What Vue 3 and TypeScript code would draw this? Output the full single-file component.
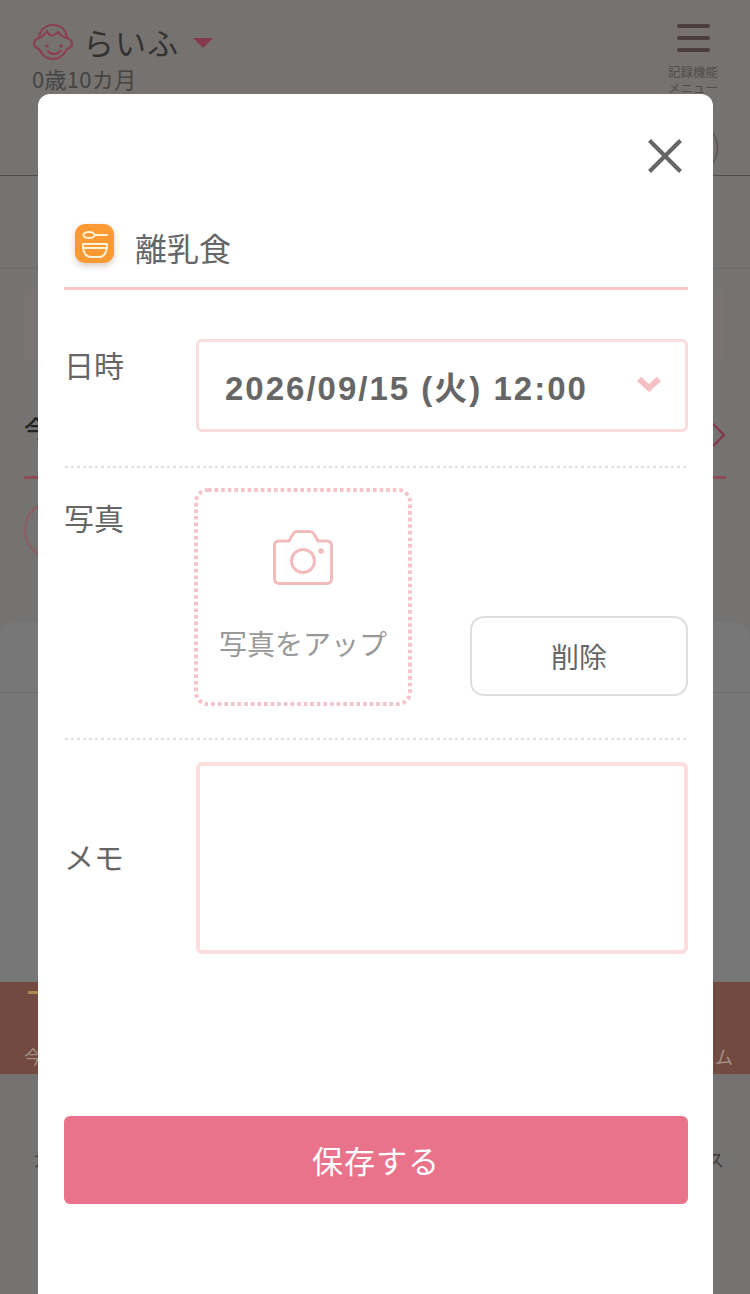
<script setup lang="ts">
const dateText = '2026/09/15 (火) 12:00'
</script>

<template>
  <div class="page">
    <header class="head">
      <div class="head-top">
        <div class="head-left">
          <div class="child">
            <svg class="face" viewBox="0 0 42 38" fill="none" stroke="#8d3f50" stroke-width="2.2" stroke-linecap="round" stroke-linejoin="round">
              <path d="M7 15C8 6 14 2 21 2s13 4 14 13c3 1 5 3 5 5.500S38 25 35 26c-3 6-8 10-14 10S10 32 7 26c-3-1-5-3-5-5.500S4 16 7 15z" />
              <path d="M7 15c4-1 6-4 8-7 1 3 3 4.500 6 4 3 0 4-2 5-3 2 3 5 5 9 6" />
              <circle cx="15" cy="23" r="1.700" fill="#8d3f50" stroke="none" />
              <circle cx="29" cy="23" r="1.700" fill="#8d3f50" stroke="none" />
              <path d="M16 28c3 4 9 4 12 0" />
            </svg>
            <span class="child-name">らいふ</span>
            <span class="caret"></span>
          </div>
          <div class="age">0歳10カ月</div>
        </div>
        <div class="menu">
          <span class="bar"></span>
          <span class="bar"></span>
          <span class="bar"></span>
          <div class="menu-text">記録機能<br />メニュー</div>
        </div>
      </div>
      <div class="head-sub">)</div>
    </header>
    <div class="sub-row"></div>
    <div class="notice"></div>
    <div class="tab-row">
      <span class="tab-text">今</span>
      <svg class="tab-arrow" viewBox="0 0 16 28" fill="none" stroke="#843a4c" stroke-width="2.4"><path d="M2 2l12 12L2 26" /></svg>
    </div>
    <div class="round"></div>
    <div class="sheet">
      <div class="sheet-head"></div>
    </div>
    <div class="band">
      <span class="band-mark"></span>
      <div class="band-text"><span>今</span><span>スム</span></div>
    </div>
    <div class="foot-text"><span>カ</span><span>ス</span></div>

    <div class="modal">
      <div class="close-row">
        <svg class="close" viewBox="0 0 34 34" fill="none" stroke="#666" stroke-width="4.2"><path d="M1.500 1.500l31 31M32.500 1.500l-31 31" /></svg>
      </div>
      <div class="title-row">
        <span class="title-icon">
          <svg viewBox="0 0 39 39" fill="none" stroke="#fff3d8" stroke-width="1.9" stroke-linecap="round" stroke-linejoin="round">
            <ellipse cx="14" cy="11" rx="5.600" ry="3" />
            <path d="M20 11h12" />
            <path d="M8 20h24v2c0 7-3.500 11-8 11h-8c-4.500 0-8-4-8-11z" />
            <path d="M8.200 24h23.600" />
          </svg>
        </span>
        <span class="title-text">離乳食</span>
      </div>

      <div class="row date-row">
        <div class="label date-label">日時</div>
        <div class="select">
          <span class="select-text">{{ dateText }}</span>
          <svg class="chev" viewBox="0 0 24 16" fill="none" stroke="#f5c0c4" stroke-width="6"><path d="M2 3l10 9 10-9" /></svg>
        </div>
      </div>
      <div class="rule"></div>

      <div class="row photo-row">
        <div class="label photo-label">写真</div>
        <div class="upload">
          <svg class="upload-border" viewBox="0 0 218 218" fill="none" stroke="#f5c3ca" stroke-width="4" stroke-dasharray="3.600 3">
            <rect x="2" y="2" width="214" height="214" rx="12" />
          </svg>
          <svg class="camera" viewBox="0 0 60 56" fill="none" stroke="#f3bcbc" stroke-width="3" stroke-linejoin="round">
            <path d="M6 11h10l4-7c1-1.500 2-2.500 4-2.500h13c2 0 3 1 4 2.500l4 7h9c3 0 4.500 2 4.500 4.500v33c0 3-1.500 5-4.500 5H6c-3 0-4.500-2-4.500-5v-33C1.500 13 3 11 6 11z" />
            <circle cx="30" cy="31" r="11.500" />
            <circle cx="48" cy="21" r="2.800" fill="#f3bcbc" stroke="none" />
          </svg>
          <span class="upload-text">写真をアップ</span>
        </div>
        <button class="delete" type="button">削除</button>
      </div>
      <div class="rule"></div>

      <div class="row memo-row">
        <div class="label memo-label">メモ</div>
        <div class="memo"></div>
      </div>

      <button class="save" type="button">保存する</button>
    </div>
  </div>
</template>

<style>
html, body {
  margin: 0;
  background: #757372;
}
</style>

<style scoped>
.page {
  position: relative;
  width: 750px;
  height: 1294px;
  overflow: hidden;
  background: #757372;
  font-family: "Noto Sans CJK JP", "Noto Sans", sans-serif;
  color: #3a3838;
}
.head {
  height: 176px;
  box-sizing: border-box;
  padding: 22px 30px 0 32px;
  background: #767270;
  border-bottom: 1px solid #4e4c4c;
}
.head-top {
  height: 100px;
  display: flex;
  justify-content: space-between;
}
.head-sub {
  text-align: right;
  margin-right: -1px;
  font-size: 30px;
  line-height: 44px;
  font-weight: 300;
  color: #555;
}
.child {
  display: flex;
  align-items: center;
  height: 40px;
}
.face {
  width: 42px;
  height: 38px;
}
.child-name {
  margin-left: 9px;
  font-size: 31px;
  line-height: 40px;
  letter-spacing: 1px;
  color: #333;
}
.caret {
  margin: 2px 0 0 14px;
  border-left: 10px solid transparent;
  border-right: 10px solid transparent;
  border-top: 10px solid #843a4c;
}
.age {
  margin-top: 1px;
  font-size: 22px;
  line-height: 30px;
  letter-spacing: 0.3px;
  color: #444;
}
.menu {
  width: 54px;
  display: flex;
  flex-direction: column;
  align-items: center;
  gap: 8px;
  padding-top: 2px;
}
.bar {
  width: 33px;
  height: 4px;
  border-radius: 2px;
  background: #4c3e3e;
}
.menu-text {
  margin-top: 4px;
  width: 60px;
  font-size: 12.500px;
  line-height: 16px;
  text-align: center;
  color: #4f4d4d;
}
.sub-row {
  height: 92px;
  border-bottom: 1px solid #6c6b6b;
}
.notice {
  height: 72px;
  margin: 20px 24px 0;
  border-radius: 6px;
  background: #797473;
}
.tab-row {
  height: 118px;
  margin: 0 24px;
  box-sizing: border-box;
  padding: 52px 0 0;
  display: flex;
  justify-content: space-between;
  border-bottom: 3px solid #8d4c55;
}
.tab-text {
  font-size: 24px;
  line-height: 30px;
  font-weight: 500;
  color: #222;
}
.tab-arrow {
  width: 16px;
  height: 28px;
  margin-top: 8px;
}
.round {
  width: 60px;
  height: 60px;
  margin: 21px 0 0 24px;
  box-sizing: border-box;
  border: 2px solid #8d5c60;
  border-radius: 50%;
}
.sheet {
  height: 360px;
  margin-top: 62px;
  border-radius: 16px 16px 0 0;
  background: #777;
}
.sheet-head {
  height: 70px;
  border-bottom: 1px solid #6c6c6c;
}
.band {
  height: 92px;
  box-sizing: border-box;
  padding: 62px 17px 0 24px;
  position: relative;
  background: #724a40;
}
.band-mark {
  position: absolute;
  left: 28px;
  top: 9px;
  width: 12px;
  height: 3px;
  background: #a58b52;
}
.band-text {
  display: flex;
  justify-content: space-between;
  font-size: 18px;
  line-height: 24px;
  color: #a58f8a;
}
.foot-text {
  display: flex;
  justify-content: space-between;
  padding: 72px 26px 0 33px;
  font-size: 18px;
  line-height: 26px;
  color: #3c3a3a;
}
.modal {
  position: absolute;
  left: 38px;
  top: 94px;
  width: 675px;
  height: 1240px;
  box-sizing: border-box;
  padding: 45px 25px 0 26px;
  background: #fff;
  border-radius: 12px;
  color: #666;
}
.close-row {
  display: flex;
  justify-content: flex-end;
  padding-right: 6px;
}
.close {
  width: 34px;
  height: 34px;
  display: block;
}
.title-row {
  margin-top: 51px;
  height: 66px;
  box-sizing: border-box;
  display: flex;
  align-items: flex-start;
  padding-left: 11px;
  border-bottom: 3px solid #fbc5c5;
}
.title-icon {
  width: 39px;
  height: 39px;
  border-radius: 10px;
  background: #fb9a33;
  box-shadow: 0 3px 6px rgba(120, 90, 60, 0.3);
}
.title-icon svg {
  display: block;
  width: 39px;
  height: 39px;
}
.title-text {
  margin: 0 0 0 21px;
  font-size: 32px;
  line-height: 46px;
  color: #666;
}
.row {
  display: flex;
}
.label {
  width: 132px;
  flex: none;
  font-size: 30px;
  line-height: 42px;
  color: #666;
}
.date-row {
  margin-top: 49px;
  height: 127px;
}
.date-label {
  padding-top: 4px;
  box-sizing: border-box;
}
.select {
  width: 492px;
  height: 93px;
  box-sizing: border-box;
  border: 3px solid #fbdcdc;
  border-radius: 6px;
  display: flex;
  align-items: center;
  justify-content: space-between;
  padding: 0 24px 0 26px;
}
.select-text {
  font-family: "Liberation Sans", "Noto Sans CJK JP", sans-serif;
  font-size: 33px;
  font-weight: 700;
  letter-spacing: 2px;
  white-space: nowrap;
  color: #666;
}
.chev {
  width: 24px;
  height: 16px;
  margin-top: -3px;
}
.rule {
  height: 2px;
  margin: 0 1px;
  background: repeating-linear-gradient(90deg, #e2dfdf 0 3px, transparent 3px 6px);
}
.photo-row {
  height: 270px;
  box-sizing: border-box;
  padding-top: 20px;
}
.photo-label {
  width: 130px;
  padding-top: 8px;
}
.upload {
  position: relative;
  width: 218px;
  height: 218px;
  box-sizing: border-box;
  display: flex;
  flex-direction: column;
  align-items: center;
  padding-top: 42px;
}
.upload-border {
  position: absolute;
  left: 0;
  top: 0;
  width: 218px;
  height: 218px;
}
.camera {
  width: 60px;
  height: 56px;
  flex: none;
}
.upload-text {
  margin-top: 37px;
  font-size: 28px;
  line-height: 40px;
  white-space: nowrap;
  color: #999;
}
.delete {
  width: 218px;
  height: 80px;
  margin: 128px 0 0 auto;
  border: 2px solid #dedede;
  border-radius: 14px;
  background: #fff;
  font: inherit;
  font-size: 28px;
  color: #666;
}
.memo-row {
  margin-top: 22px;
  align-items: center;
}
.memo-label {
  padding-bottom: 4px;
  box-sizing: border-box;
}
.memo {
  width: 492px;
  height: 192px;
  box-sizing: border-box;
  border: 4px solid #fddedf;
  border-radius: 6px;
}
.save {
  display: block;
  width: 624px;
  height: 88px;
  margin-top: 162px;
  padding-bottom: 3px;
  border: none;
  border-radius: 6px;
  background: #e9738b;
  font: inherit;
  font-size: 31px;
  letter-spacing: 1px;
  color: #fff;
}
</style>
